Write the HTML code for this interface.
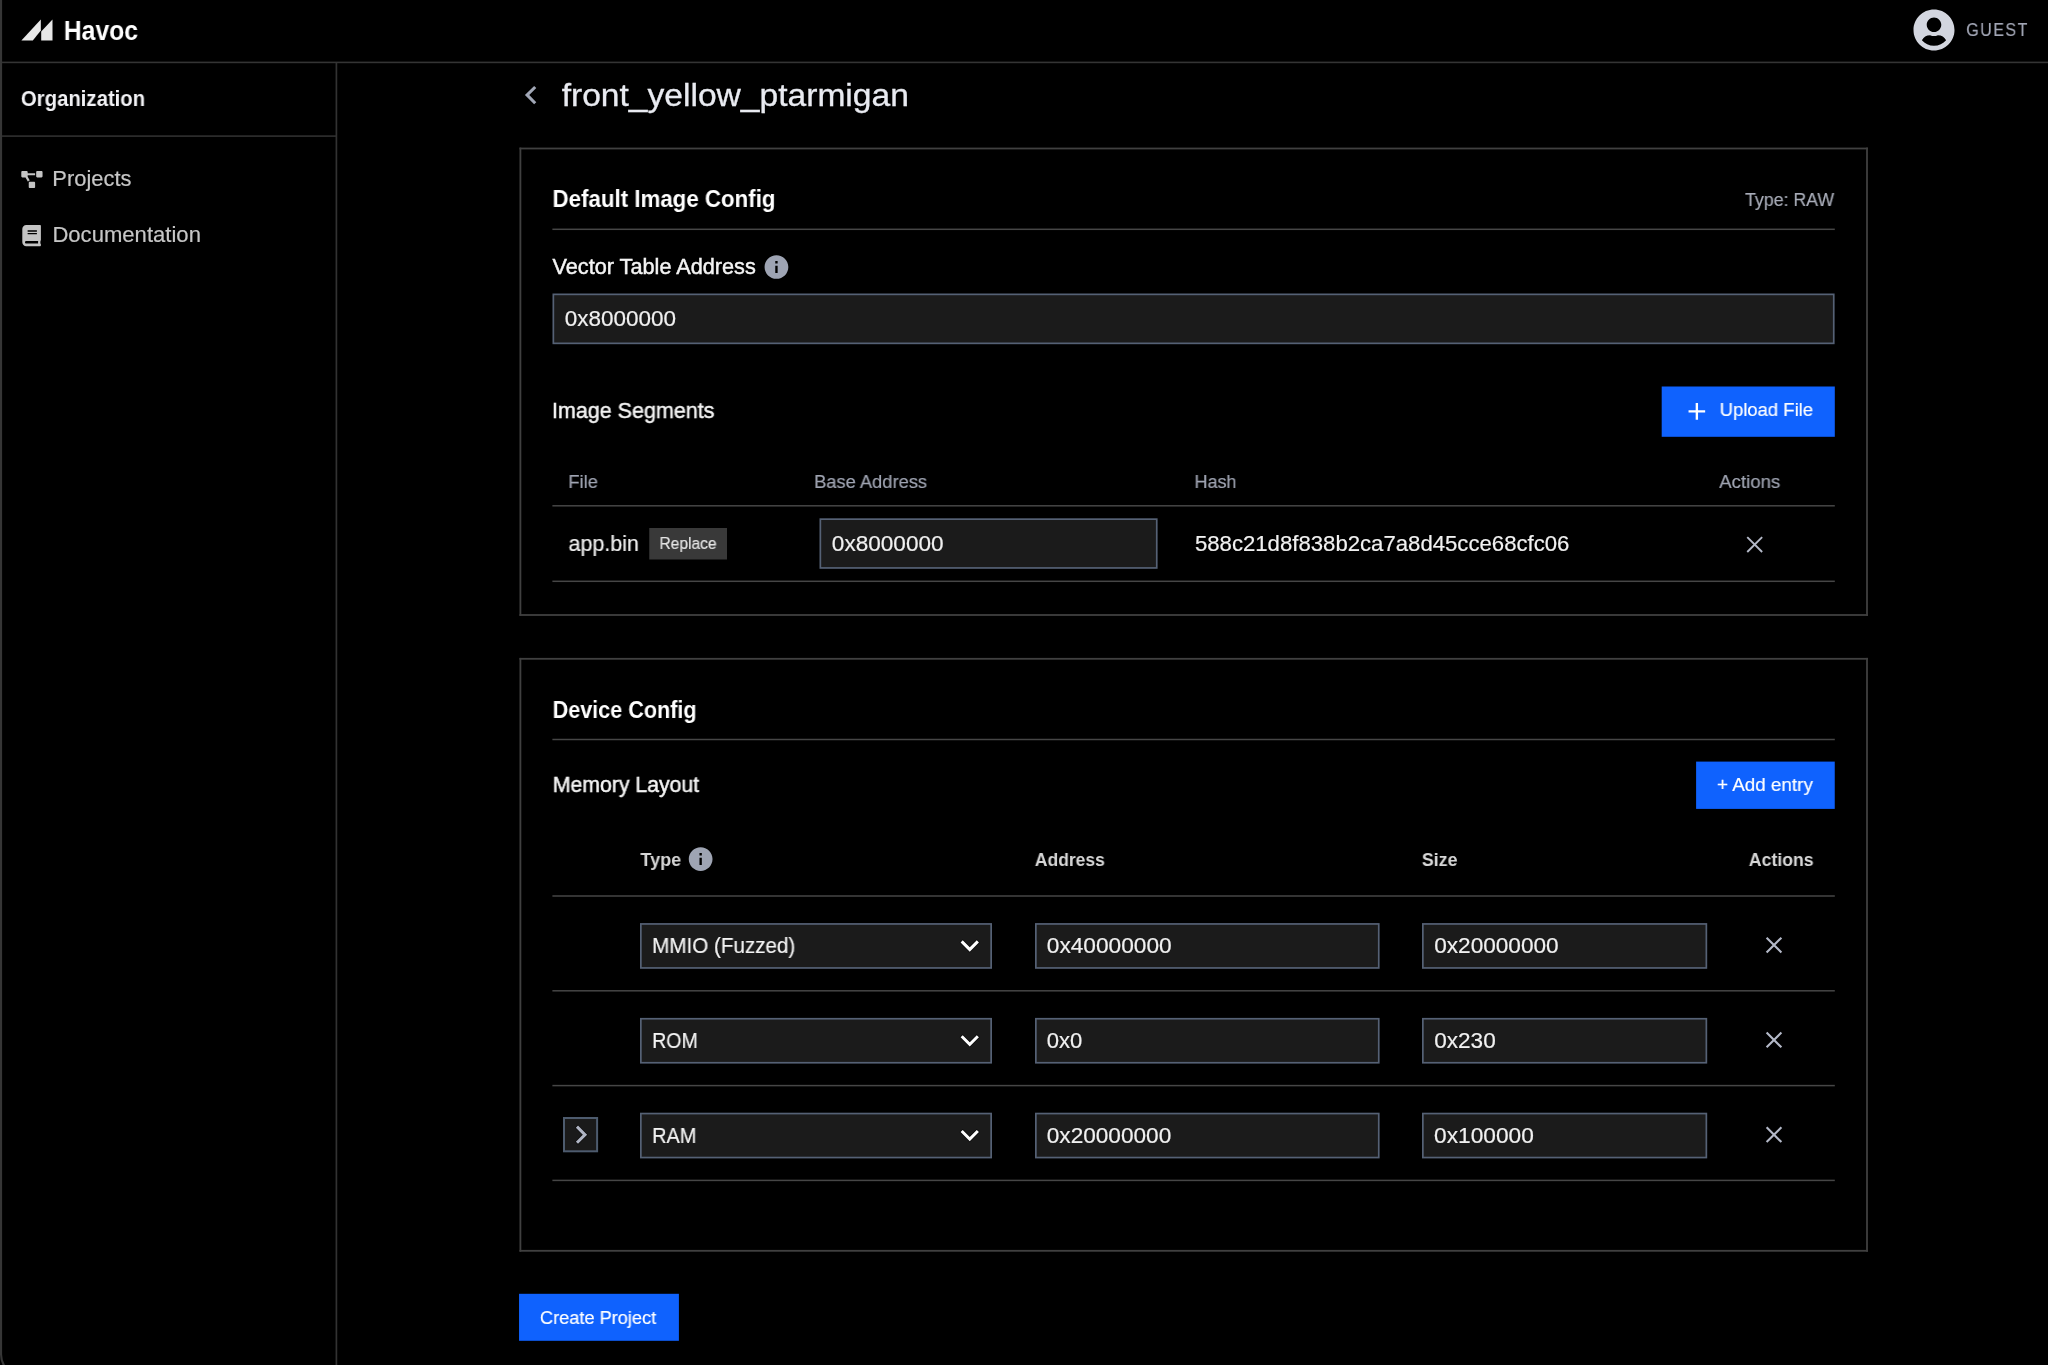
<!DOCTYPE html>
<html lang="en">
<head>
<meta charset="utf-8">
<title>Havoc – front_yellow_ptarmigan</title>
<style>
*{box-sizing:border-box;margin:0;padding:0}
html,body{width:2048px;height:1365px;background:#000;overflow:hidden}
body{position:relative;font-family:"Liberation Sans",sans-serif;color:#f4f4f4}
.t{will-change:transform;position:absolute;white-space:nowrap;transform-origin:0 0;display:block;font-weight:400;font-style:normal}
svg{position:absolute;overflow:visible}
</style>
</head>
<body>
<svg class="lines" style="left:0;top:0" width="2048" height="1365" viewBox="0 0 2048 1365">
<rect x="0" y="61.60" width="2048" height="1.6" fill="#343434"/>
<rect x="0" y="135.30" width="337" height="1.6" fill="#303030"/>
<rect x="519.5" y="147.60" width="1348.5" height="1.8" fill="#404040"/>
<rect x="519.5" y="614.10" width="1348.5" height="1.8" fill="#404040"/>
<rect x="552.4" y="228.55" width="1282.4" height="1.5" fill="#464646"/>
<rect x="552.4" y="505.05" width="1282.4" height="1.5" fill="#464646"/>
<rect x="552.4" y="580.55" width="1282.4" height="1.5" fill="#464646"/>
<rect x="519.5" y="657.90" width="1348.5" height="1.8" fill="#404040"/>
<rect x="519.5" y="1249.90" width="1348.5" height="1.8" fill="#404040"/>
<rect x="552.4" y="738.75" width="1282.4" height="1.5" fill="#464646"/>
<rect x="552.4" y="895.25" width="1282.4" height="1.5" fill="#464646"/>
<rect x="552.4" y="990.05" width="1282.4" height="1.5" fill="#464646"/>
<rect x="552.4" y="1084.85" width="1282.4" height="1.5" fill="#464646"/>
<rect x="552.4" y="1179.65" width="1282.4" height="1.5" fill="#464646"/>
<rect x="335.55" y="63" width="1.7" height="1302.00" fill="#323232"/>
<rect x="519.50" y="147.6" width="1.8" height="468.30" fill="#404040"/>
<rect x="1866.10" y="147.6" width="1.8" height="468.30" fill="#404040"/>
<rect x="519.50" y="657.9" width="1.8" height="593.80" fill="#404040"/>
<rect x="1866.10" y="657.9" width="1.8" height="593.80" fill="#404040"/>
<rect x="553.35" y="294.35" width="1280.40" height="49.00" fill="#1b1b1b" stroke="#556175" stroke-width="1.7"/>
<rect x="820.35" y="519.15" width="336.40" height="48.80" fill="#1b1b1b" stroke="#556175" stroke-width="1.7"/>
<rect x="640.85" y="923.95" width="350.30" height="44.00" fill="#1b1b1b" stroke="#556175" stroke-width="1.7"/>
<rect x="1035.85" y="923.95" width="342.90" height="44.00" fill="#1b1b1b" stroke="#556175" stroke-width="1.7"/>
<rect x="1422.85" y="923.95" width="283.50" height="44.00" fill="#1b1b1b" stroke="#556175" stroke-width="1.7"/>
<rect x="640.85" y="1018.75" width="350.30" height="44.00" fill="#1b1b1b" stroke="#556175" stroke-width="1.7"/>
<rect x="1035.85" y="1018.75" width="342.90" height="44.00" fill="#1b1b1b" stroke="#556175" stroke-width="1.7"/>
<rect x="1422.85" y="1018.75" width="283.50" height="44.00" fill="#1b1b1b" stroke="#556175" stroke-width="1.7"/>
<rect x="640.85" y="1113.55" width="350.30" height="44.00" fill="#1b1b1b" stroke="#556175" stroke-width="1.7"/>
<rect x="1035.85" y="1113.55" width="342.90" height="44.00" fill="#1b1b1b" stroke="#556175" stroke-width="1.7"/>
<rect x="1422.85" y="1113.55" width="283.50" height="44.00" fill="#1b1b1b" stroke="#556175" stroke-width="1.7"/>
<rect x="564.00" y="1118.00" width="33.10" height="33.30" fill="#1a1a1a" stroke="#4d5b6e" stroke-width="2.0"/>
<rect x="1661.70" y="386.50" width="173.10" height="50.30" fill="#0f62fe"/>
<rect x="1696.10" y="761.60" width="138.65" height="47.30" fill="#0f62fe"/>
<rect x="519.05" y="1293.80" width="159.85" height="47.00" fill="#0f62fe"/>
<rect x="649.25" y="528.00" width="77.75" height="31.50" fill="#393939"/>
<path d="M1.05 0V1354.5A21.8 21.8 0 0 0 4.33 1366" fill="none" stroke="#363636" stroke-width="2.1"/>
</svg>
<header>
  <svg style="left:21px;top:19px" width="33" height="23" viewBox="0.0000 0.0000 33.0000 23.0000" preserveAspectRatio="none">
    <path d="M0.4 21.5 L19.8 0.5 L19.8 11.5 L11.8 21.5 Z" fill="#e9e9e9"/>
    <path d="M20.2 12.5 L31.5 0.5 L31.5 21.5 L20.2 21.5 Z" fill="#e6e6e6"/>
  </svg>
  <span class="t" style="left:63px;top:14px;font-size:27.1px;line-height:33px;color:#ffffff;transform:translateX(0.80px) scaleX(0.9120);font-weight:700;">Havoc</span>
  <svg style="left:1913px;top:9px" width="43" height="43" viewBox="-6.0488 1.9512 520.1951 520.1951" preserveAspectRatio="none">
    <path fill="#d3d6df" d="M248 8C111 8 0 119 0 256s111 248 248 248 248-111 248-248S385 8 248 8zm0 96c48.600 0 88 39.400 88 88s-39.400 88-88 88-88-39.400-88-88 39.400-88 88-88zm0 344c-58.700 0-111.300-26.600-146.500-68.200 18.800-35.400 55.600-59.800 98.500-59.800 2.400 0 4.800.4 7.100 1.100 13 4.200 26.600 6.900 40.900 6.900 14.300 0 28-2.700 40.900-6.900 2.300-.7 4.700-1.100 7.100-1.100 42.900 0 79.700 24.400 98.500 59.800C359.300 421.400 306.700 448 248 448z"/>
  </svg>
  <span class="t" style="left:1966px;top:18px;font-size:19px;line-height:23px;color:#a2a6b5;transform:translateX(0.27px) scaleX(0.8446);letter-spacing:1.7px;-webkit-text-stroke:0.18px #a2a6b5;">GUEST</span>
</header>
<nav>
  <span class="t" style="left:20px;top:85px;font-size:21.6px;line-height:27px;color:#f2f2f5;transform:translateX(0.91px) scaleX(0.9412);font-weight:700;">Organization</span>
  <svg style="left:21px;top:171px" width="23" height="18" viewBox="-9.0353 0.0000 692.7059 542.1176" preserveAspectRatio="none">
    <path fill="#c4c4c4" d="M384 320H256c-17.670 0-32 14.330-32 32v128c0 17.670 14.330 32 32 32h128c17.670 0 32-14.330 32-32V352c0-17.670-14.330-32-32-32zM192 32c0-17.670-14.330-32-32-32H32C14.330 0 0 14.330 0 32v128c0 17.670 14.330 32 32 32h95.720l73.160 128.040C211.980 300.980 232.400 288 256 288h.280L192 175.510V128h224V64H192V32zM608 0H480c-17.670 0-32 14.330-32 32v128c0 17.670 14.330 32 32 32h128c17.670 0 32-14.330 32-32V32c0-17.670-14.330-32-32-32z"/>
  </svg>
  <span class="t" style="left:52px;top:166px;font-size:21.4px;line-height:26px;color:#c6c6c6;transform:translateX(0.33px) scaleX(1.0238);-webkit-text-stroke:0.18px #c6c6c6;">Projects</span>
  <svg style="left:22px;top:225px" width="20" height="23" viewBox="-7.2258 0.0000 481.7204 555.4717" preserveAspectRatio="none">
    <path fill="#c4c4c4" d="M448 360V24c0-13.300-10.700-24-24-24H96C43 0 0 43 0 96v320c0 53 43 96 96 96h328c13.300 0 24-10.700 24-24v-16c0-7.500-3.500-14.300-8.900-18.700-4.200-15.400-4.200-59.300 0-74.700 5.400-4.300 8.900-11.100 8.900-18.600zM128 134c0-3.300 2.700-6 6-6h212c3.300 0 6 2.700 6 6v20c0 3.300-2.700 6-6 6H134c-3.300 0-6-2.700-6-6v-20zm0 64c0-3.300 2.700-6 6-6h212c3.300 0 6 2.700 6 6v20c0 3.300-2.700 6-6 6H134c-3.300 0-6-2.700-6-6v-20zm253.400 250H96c-17.700 0-32-14.300-32-32 0-17.600 14.400-32 32-32h285.400c-1.900 17.100-1.900 46.900 0 64z"/>
  </svg>
  <span class="t" style="left:52px;top:222px;font-size:21.4px;line-height:26px;color:#c6c6c6;transform:translateX(0.40px) scaleX(1.0322);-webkit-text-stroke:0.18px #c6c6c6;">Documentation</span>
</nav>
<main>
  <svg style="left:512px;top:76px" width="39" height="39" viewBox="-0.3902 -0.4228 25.3659 25.3659" preserveAspectRatio="none">
    <path fill="#a1a7b6" d="M15.41 7.41L14 6l-6 6 6 6 1.41-1.410L10.830 12z"/>
  </svg>
  <h1 class="t" style="left:561px;top:75px;font-size:32px;line-height:40px;color:#e9ebf1;transform:translateX(0.67px) scaleX(1.0494);-webkit-text-stroke:0.3px #e9ebf1;">front_yellow_ptarmigan</h1>

  <section>
  <h2 class="t" style="left:552px;top:183px;font-size:24.2px;line-height:31px;color:#ffffff;transform:translateX(0.51px) scaleX(0.9218);font-weight:700;">Default Image Config</h2>
  <span class="t" style="left:1745px;top:188px;font-size:18.9px;line-height:23px;color:#a9adb9;transform:translateX(0.04px) scaleX(0.9397);-webkit-text-stroke:0.18px #a9adb9;">Type: RAW</span>
  <label class="t" style="left:552px;top:253px;font-size:21.6px;line-height:27px;color:#f4f4f4;transform:translateX(0.54px) scaleX(1.0038);-webkit-text-stroke:0.45px #f4f4f4;">Vector Table Address</label>
  <svg style="left:762px;top:252px" width="30" height="31" viewBox="-0.1684 -0.6316 25.2632 26.1053" preserveAspectRatio="none">
    <path fill="#9ea4b3" d="M12 2C6.480 2 2 6.480 2 12s4.480 10 10 10 10-4.480 10-10S17.520 2 12 2zm1 15h-2v-6h2v6zm0-8h-2V7h2v2z"/>
  </svg>
  <span class="t" style="left:564px;top:305px;font-size:21.6px;line-height:27px;color:#f1f1f1;transform:translateX(0.86px) scaleX(1.0409);-webkit-text-stroke:0.18px #f1f1f1;">0x8000000</span>
  <h3 class="t" style="left:551px;top:397px;font-size:21.6px;line-height:27px;color:#f4f4f4;transform:translateX(0.95px) scaleX(0.9950);-webkit-text-stroke:0.45px #f4f4f4;">Image Segments</h3>
  <svg style="left:1682px;top:397px" width="31" height="30" viewBox="-0.5053 -0.0842 26.1053 25.2632" preserveAspectRatio="none">
    <path fill="#fff" d="M19 13h-6v6h-2v-6H5v-2h6V5h2v6h6v2z"/>
  </svg>
  <span class="t" style="left:1719px;top:398px;font-size:18.9px;line-height:23px;color:#ffffff;transform:translateX(0.64px) scaleX(0.9779);-webkit-text-stroke:0.18px #ffffff;">Upload File</span>
  <span class="t" style="left:568px;top:470px;font-size:18.9px;line-height:23px;color:#a0a5b3;transform:translateX(0.33px) scaleX(0.9697);-webkit-text-stroke:0.18px #a0a5b3;">File</span>
  <span class="t" style="left:814px;top:470px;font-size:18.9px;line-height:23px;color:#a0a5b3;transform:translateX(0.15px) scaleX(0.9685);-webkit-text-stroke:0.18px #a0a5b3;">Base Address</span>
  <span class="t" style="left:1194px;top:470px;font-size:18.9px;line-height:23px;color:#a0a5b3;transform:translateX(0.51px) scaleX(0.9499);-webkit-text-stroke:0.18px #a0a5b3;">Hash</span>
  <span class="t" style="left:1719px;top:470px;font-size:18.9px;line-height:23px;color:#a0a5b3;transform:translateX(0.25px) scaleX(0.9846);-webkit-text-stroke:0.18px #a0a5b3;">Actions</span>
  <span class="t" style="left:568px;top:530px;font-size:21.6px;line-height:27px;color:#f1f1f1;transform:translateX(0.56px) scaleX(0.9934);-webkit-text-stroke:0.18px #f1f1f1;">app.bin</span>
  <span class="t" style="left:659px;top:533px;font-size:16.4px;line-height:20px;color:#e4e4e4;transform:translateX(0.49px) scaleX(0.9493);-webkit-text-stroke:0.18px #e4e4e4;">Replace</span>
  <span class="t" style="left:831px;top:530px;font-size:21.6px;line-height:27px;color:#f1f1f1;transform:translateX(0.85px) scaleX(1.0451);-webkit-text-stroke:0.18px #f1f1f1;">0x8000000</span>
  <span class="t" style="left:1194px;top:530px;font-size:21.6px;line-height:27px;color:#f1f1f1;transform:translateX(0.93px) scaleX(1.0260);-webkit-text-stroke:0.18px #f1f1f1;">588c21d8f838b2ca7a8d45cce68cfc06</span>
  <svg style="left:1754px;top:544px" width="3" height="3" viewBox="-0.7000 -0.5500 3.0000 3.0000" preserveAspectRatio="none">
    <path d="M-7.45 -7.45L7.45 7.45M7.45 -7.45L-7.45 7.45" stroke="#b4b9c8" stroke-width="1.9" fill="none"/>
  </svg>
  </section>

  <section>
  <h2 class="t" style="left:552px;top:694px;font-size:24.2px;line-height:31px;color:#ffffff;transform:translateX(0.63px) scaleX(0.8924);font-weight:700;">Device Config</h2>
  <h3 class="t" style="left:552px;top:771px;font-size:21.6px;line-height:27px;color:#f4f4f4;transform:translateX(0.81px) scaleX(0.9831);-webkit-text-stroke:0.45px #f4f4f4;">Memory Layout</h3>
  <span class="t" style="left:1717px;top:773px;font-size:18.9px;line-height:23px;color:#ffffff;transform:translateX(0.03px) scaleX(0.9970);-webkit-text-stroke:0.18px #ffffff;">+ Add entry</span>
  <span class="t" style="left:640px;top:848px;font-size:18.9px;line-height:23px;color:#d6d6d6;transform:translateX(0.38px) scaleX(0.9541);font-weight:700;">Type</span>
  <svg style="left:686px;top:844px" width="30" height="31" viewBox="-0.3368 -0.6737 25.2632 26.1053" preserveAspectRatio="none">
    <path fill="#9ea4b3" d="M12 2C6.480 2 2 6.480 2 12s4.480 10 10 10 10-4.480 10-10S17.520 2 12 2zm1 15h-2v-6h2v6zm0-8h-2V7h2v2z"/>
  </svg>
  <span class="t" style="left:1034px;top:848px;font-size:18.9px;line-height:23px;color:#d6d6d6;transform:translateX(0.80px) scaleX(0.9276);font-weight:700;">Address</span>
  <span class="t" style="left:1421px;top:848px;font-size:18.9px;line-height:23px;color:#d6d6d6;transform:translateX(0.84px) scaleX(0.9460);font-weight:700;">Size</span>
  <span class="t" style="left:1748px;top:848px;font-size:18.9px;line-height:23px;color:#d6d6d6;transform:translateX(0.75px) scaleX(0.9359);font-weight:700;">Actions</span>

  <!-- row 1 -->
  <span class="t" style="left:652px;top:932px;font-size:21.6px;line-height:27px;color:#f4f4f4;transform:translateX(0.17px) scaleX(0.9541);-webkit-text-stroke:0.18px #f4f4f4;">MMIO (Fuzzed)</span>
  <svg style="left:951px;top:927px" width="39" height="38" viewBox="-0.2616 -0.1308 25.5041 24.8501" preserveAspectRatio="none">
    <path fill="#fff" stroke="#0b0b0b" stroke-width="0.9" paint-order="stroke" d="M16.590 8.590L12 13.170 7.410 8.590 6 10l6 6 6-6z"/>
  </svg>
  <span class="t" style="left:1046px;top:932px;font-size:21.6px;line-height:27px;color:#f1f1f1;transform:translateX(0.77px) scaleX(1.0503);-webkit-text-stroke:0.18px #f1f1f1;">0x40000000</span>
  <span class="t" style="left:1434px;top:932px;font-size:21.6px;line-height:27px;color:#f1f1f1;transform:translateX(0.20px) scaleX(1.0464);-webkit-text-stroke:0.18px #f1f1f1;">0x20000000</span>
  <svg style="left:1774px;top:945px" width="2" height="3" viewBox="0.0000 -0.1000 2.0000 3.0000" preserveAspectRatio="none">
    <path d="M-7.4 -7.4L7.4 7.4M7.4 -7.4L-7.4 7.4" stroke="#b4b9c8" stroke-width="2.1" fill="none"/>
  </svg>

  <!-- row 2 -->
  <span class="t" style="left:652px;top:1027px;font-size:21.6px;line-height:27px;color:#f4f4f4;transform:translateX(0.24px) scaleX(0.9023);-webkit-text-stroke:0.18px #f4f4f4;">ROM</span>
  <svg style="left:951px;top:1022px" width="39" height="38" viewBox="-0.2616 0.0000 25.5041 24.8501" preserveAspectRatio="none">
    <path fill="#fff" stroke="#0b0b0b" stroke-width="0.9" paint-order="stroke" d="M16.590 8.590L12 13.170 7.410 8.590 6 10l6 6 6-6z"/>
  </svg>
  <span class="t" style="left:1046px;top:1027px;font-size:21.6px;line-height:27px;color:#f1f1f1;transform:translateX(0.84px) scaleX(1.0204);-webkit-text-stroke:0.18px #f1f1f1;">0x0</span>
  <span class="t" style="left:1434px;top:1027px;font-size:21.6px;line-height:27px;color:#f1f1f1;transform:translateX(0.23px) scaleX(1.0451);-webkit-text-stroke:0.18px #f1f1f1;">0x230</span>
  <svg style="left:1774px;top:1039px" width="2" height="3" viewBox="0.0000 -0.9000 2.0000 3.0000" preserveAspectRatio="none">
    <path d="M-7.4 -7.4L7.4 7.4M7.4 -7.4L-7.4 7.4" stroke="#b4b9c8" stroke-width="2.1" fill="none"/>
  </svg>

  <!-- row 3 -->
  <svg style="left:562px;top:1116px" width="39" height="38" viewBox="-0.5260 -0.2630 25.6438 24.9863" preserveAspectRatio="none">
    <path fill="#b0b5c4" stroke="#0b0b0b" stroke-width="0.8" paint-order="stroke" d="M10 6L8.590 7.410 13.170 12l-4.580 4.590L10 18l6-6z"/>
  </svg>
  <span class="t" style="left:652px;top:1122px;font-size:21.6px;line-height:27px;color:#f4f4f4;transform:translateX(0.22px) scaleX(0.9196);-webkit-text-stroke:0.18px #f4f4f4;">RAM</span>
  <svg style="left:951px;top:1116px" width="39" height="39" viewBox="-0.2616 -0.5232 25.5041 25.5041" preserveAspectRatio="none">
    <path fill="#fff" stroke="#0b0b0b" stroke-width="0.9" paint-order="stroke" d="M16.590 8.590L12 13.170 7.410 8.590 6 10l6 6 6-6z"/>
  </svg>
  <span class="t" style="left:1046px;top:1122px;font-size:21.6px;line-height:27px;color:#f1f1f1;transform:translateX(0.78px) scaleX(1.0466);-webkit-text-stroke:0.18px #f1f1f1;">0x20000000</span>
  <span class="t" style="left:1434px;top:1122px;font-size:21.6px;line-height:27px;color:#f1f1f1;transform:translateX(0.08px) scaleX(1.0510);-webkit-text-stroke:0.18px #f1f1f1;">0x100000</span>
  <svg style="left:1774px;top:1134px" width="2" height="3" viewBox="0.0000 -0.7000 2.0000 3.0000" preserveAspectRatio="none">
    <path d="M-7.4 -7.4L7.4 7.4M7.4 -7.4L-7.4 7.4" stroke="#b4b9c8" stroke-width="2.1" fill="none"/>
  </svg>
  </section>

  <span class="t" style="left:539px;top:1306px;font-size:18.9px;line-height:23px;color:#ffffff;transform:translateX(0.90px) scaleX(0.9631);-webkit-text-stroke:0.18px #ffffff;">Create Project</span>
</main>
</body>
</html>
